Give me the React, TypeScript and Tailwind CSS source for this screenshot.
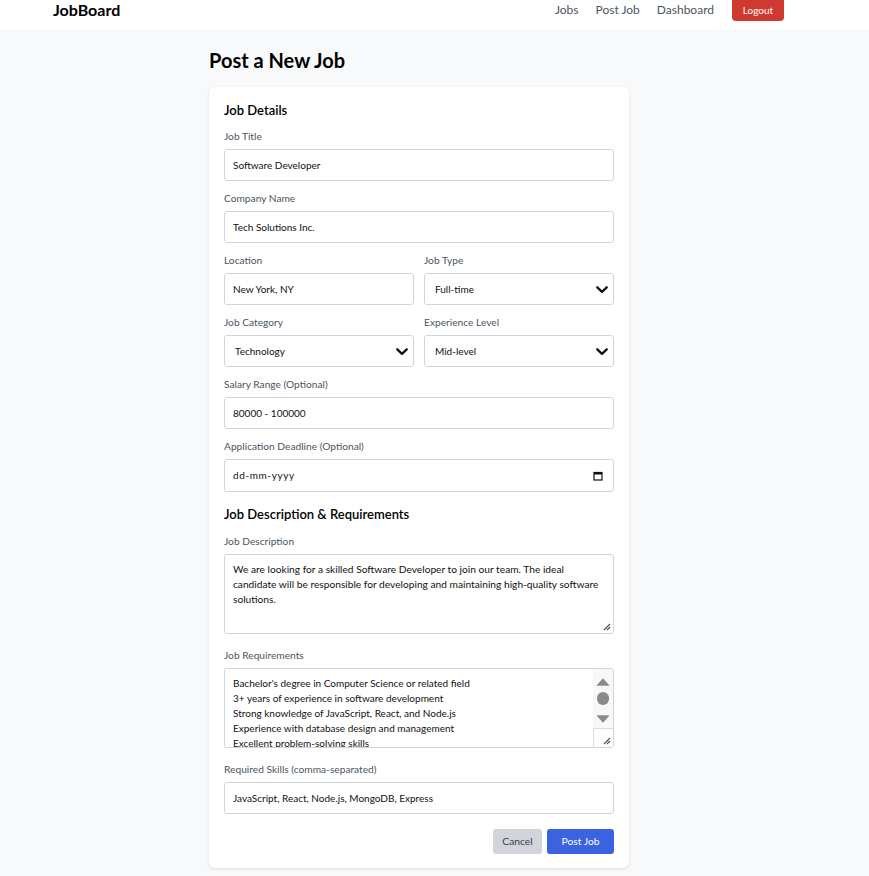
import React from "react";

const font = { fontFamily: '"Segoe UI", Lato, "Noto Sans", sans-serif' };

function Label({ children }: { children: React.ReactNode }) {
  return <div className="text-[10.2px] leading-[18px] text-[#4b5563] mb-[4px]">{children}</div>;
}

function Chevron() {
  return (
    <svg width="12" height="8" viewBox="0 0 12 8" className="absolute right-[5px] top-[12px]">
      <path d="M1.3 1.3 L6 5.8 L10.7 1.3" fill="none" stroke="#111" strokeWidth="2.3" strokeLinecap="round" strokeLinejoin="round" />
    </svg>
  );
}

function TextField({ value }: { value: string }) {
  return (
    <div className="h-[32px] border border-[#d1d5db] rounded-[3px] bg-white flex items-center px-[8px] text-[10px] text-[#111]">
      {value}
    </div>
  );
}

function SelectField({ value }: { value: string }) {
  return (
    <div className="relative h-[32px] border border-[#d1d5db] rounded-[3px] bg-white flex items-center pl-[10px] text-[10px] text-[#111]">
      {value}
      <Chevron />
    </div>
  );
}

function Field({ label, children, mb = "mb-[8px]" }: { label: string; children: React.ReactNode; mb?: string }) {
  return (
    <div className={mb}>
      <Label>{label}</Label>
      {children}
    </div>
  );
}

function Grip() {
  return (
    <svg width="9" height="9" viewBox="0 0 9 9" className="absolute right-[2px] bottom-[2px]">
      <path d="M8 2 L2 8 M8 5 L5 8" stroke="#555" strokeWidth="1.2" />
    </svg>
  );
}

export default function App() {
  const reqs = [
    "Bachelor's degree in Computer Science or related field",
    "3+ years of experience in software development",
    "Strong knowledge of JavaScript, React, and Node.js",
    "Experience with database design and management",
    "Excellent problem-solving skills",
  ];
  return (
    <div style={font} className="min-h-[876px] bg-[#f8f9fa]">
      <nav className="h-[29px] bg-white flex items-start justify-between pl-[53px] pr-[85px]">
        <div className="h-[20px] flex items-center text-[16px] font-bold text-black">JobBoard</div>
        <div className="flex items-center h-[20px] text-[12px] text-[#4b5563]">
          <span>Jobs</span>
          <span className="ml-[17px]">Post Job</span>
          <span className="ml-[17px]">Dashboard</span>
          <div className="ml-[18px] w-[52px] h-[21px] bg-[#d0392f] rounded-b-[4px] text-white text-[10px] flex items-center justify-center">
            Logout
          </div>
        </div>
      </nav>

      <main className="w-[451px] mx-auto pt-[17px] pb-[8px]">
        <h1 className="text-[20px] leading-[28px] font-bold text-black mb-[13px]">Post a New Job</h1>
        <div className="w-[420px] bg-white rounded-[6px] shadow-[0_1px_3px_rgba(0,0,0,0.12)] px-[15px] pt-[14px] pb-[14px]">
          <h2 className="text-[13px] leading-[18px] font-semibold text-black mb-[8px]">Job Details</h2>
          <Field label="Job Title"><TextField value="Software Developer" /></Field>
          <Field label="Company Name"><TextField value="Tech Solutions Inc." /></Field>
          <div className="grid grid-cols-2 gap-x-[10px]">
            <Field label="Location"><TextField value="New York, NY" /></Field>
            <Field label="Job Type"><SelectField value="Full-time" /></Field>
            <Field label="Job Category"><SelectField value="Technology" /></Field>
            <Field label="Experience Level"><SelectField value="Mid-level" /></Field>
          </div>
          <Field label="Salary Range (Optional)"><TextField value="80000 - 100000" /></Field>
          <Field label="Application Deadline (Optional)">
            <div className="relative h-[33px] border border-[#d1d5db] rounded-[3px] bg-white flex items-center px-[8px] text-[10px] text-[#111] tracking-[0.6px]">
              dd-mm-yyyy
              <svg width="10" height="10" viewBox="0 0 10 10" className="absolute right-[10px] top-[11px]">
                <rect x="1" y="1.5" width="8" height="7.5" fill="none" stroke="#111" strokeWidth="1.2" />
                <rect x="1" y="1.5" width="8" height="2" fill="#111" />
              </svg>
            </div>
          </Field>

          <h2 className="text-[13px] leading-[18px] font-semibold text-black mt-[13px] mb-[9px]">Job Description &amp; Requirements</h2>
          <Field label="Job Description" mb="mb-[12px]">
            <div className="relative h-[80px] border border-[#d1d5db] rounded-[3px] bg-white px-[8px] pt-[7px] text-[10.2px] leading-[15px] text-[#111]">
              We are looking for a skilled Software Developer to join our team. The ideal
              <br />
              candidate will be responsible for developing and maintaining high-quality software
              <br />
              solutions.
              <Grip />
            </div>
          </Field>
          <Field label="Job Requirements" mb="mb-[12px]">
            <div className="relative h-[80px] border border-[#d1d5db] rounded-[3px] bg-white flex overflow-hidden">
              <div className="flex-1 px-[8px] pt-[7px] text-[10px] leading-[15px] text-[#111]">
                {reqs.map((r) => (
                  <div key={r} className="whitespace-nowrap">{r}</div>
                ))}
              </div>
              <div className="w-[20px] bg-[#f8f8f8] flex flex-col items-center">
                <svg width="14" height="8" viewBox="0 0 14 8" className="mt-[9px]">
                  <path d="M7 0.3 L13.7 7.7 L0.3 7.7 Z" fill="#8a8a8a" />
                </svg>
                <div className="w-[12px] h-[13px] rounded-full bg-[#8a8a8a] mt-[6px]" />
                <svg width="14" height="8" viewBox="0 0 14 8" className="mt-[10px]">
                  <path d="M0.3 0.3 L13.7 0.3 L7 7.7 Z" fill="#8a8a8a" />
                </svg>
                <div className="mt-auto w-[20px] h-[19px] border-t border-l border-[#dcdcdc] bg-white relative">
                  <Grip />
                </div>
              </div>
            </div>
          </Field>
          <Field label="Required Skills (comma-separated)" mb="mb-[15px]">
            <TextField value="JavaScript, React, Node.js, MongoDB, Express" />
          </Field>
          <div className="flex justify-end gap-[5px]">
            <button className="h-[25px] w-[49px] rounded-[3px] bg-[#d1d5db] text-[#374151] text-[10.3px]">Cancel</button>
            <button className="h-[25px] w-[67px] rounded-[3px] bg-[#3b63e0] text-white text-[10.3px]">Post Job</button>
          </div>
        </div>
      </main>
    </div>
  );
}
